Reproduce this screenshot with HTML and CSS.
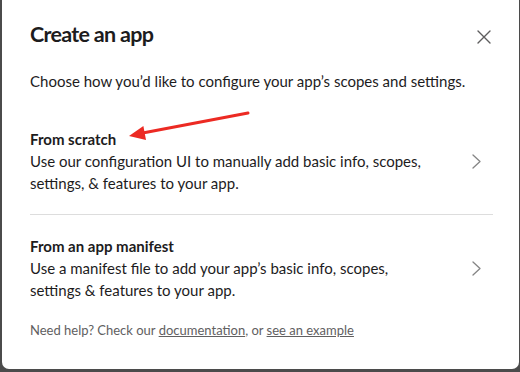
FILE: index.html
```html
<!DOCTYPE html>
<html>
<head>
<meta charset="utf-8">
<link rel="stylesheet" href="styles.css">
</head>
<body>
<div class="modal">
  <div class="header">
    <h1 class="title">Create an app</h1>
    <button class="close" aria-label="Close">
      <svg width="14" height="14" viewBox="0 0 14 14"><path d="M1 1 L13 13 M13 1 L1 13" stroke="#5e5d5e" stroke-width="1.4" fill="none" stroke-linecap="round"/></svg>
    </button>
  </div>
  <p class="intro">Choose how you’d like to configure your app’s scopes and settings.</p>
  <div class="option option-first">
    <div class="option-text">
      <div class="option-title">From scratch</div>
      <div class="option-desc">Use our configuration UI to manually add basic info, scopes, settings, &amp; features to your app.</div>
    </div>
    <svg class="chev" width="9" height="15" viewBox="0 0 9 15"><path d="M1 1 L8 7.5 L1 14" stroke="#858585" stroke-width="1.3" fill="none" stroke-linecap="round" stroke-linejoin="round"/></svg>
  </div>
  <div class="divider"></div>
  <div class="option">
    <div class="option-text">
      <div class="option-title">From an app manifest</div>
      <div class="option-desc">Use a manifest file to add your app’s basic info, scopes, settings &amp; features to your app.</div>
    </div>
    <svg class="chev" width="9" height="15" viewBox="0 0 9 15"><path d="M1 1 L8 7.5 L1 14" stroke="#858585" stroke-width="1.3" fill="none" stroke-linecap="round" stroke-linejoin="round"/></svg>
  </div>
  <p class="help">Need help? Check our <a href="#">documentation</a>, or <a href="#">see an example</a></p>
  <svg class="arrow" width="520" height="372" viewBox="0 0 520 372">
    <line x1="248" y1="113" x2="140" y2="133.5" stroke="#ec2a23" stroke-width="3" stroke-linecap="round"/>
    <polygon points="129,136 143.4,126 146,140" fill="#ec2a23"/>
  </svg>
</div>
</body>
</html>
```
FILE: styles.css
```css
html, body {
  margin: 0;
  padding: 0;
  width: 520px;
  height: 372px;
  overflow: hidden;
  background: #4b4b4b;
}
body {
  font-family: Lato, "Noto Sans", sans-serif;
  color: #1d1c1d;
}
.modal {
  position: relative;
  box-sizing: border-box;
  width: 517px;
  height: 369px;
  margin-left: 2px;
  background: #fff;
  border-radius: 0 0 7px 7px;
  padding: 20px 26px 0 28px;
}
.header {
  display: flex;
  justify-content: space-between;
  align-items: flex-start;
}
.title {
  margin: 0;
  font-size: 21.5px;
  line-height: 28px;
  font-weight: 700;
  letter-spacing: -0.7px;
}
.close {
  border: 0;
  background: none;
  padding: 0;
  margin: 10px 2px 0 0;
  width: 14px;
  height: 14px;
  display: block;
}
.close svg { display: block; }
.intro {
  margin: 22px 0 0;
  font-size: 15px;
  line-height: 22px;
}
.option {
  display: flex;
  align-items: center;
  justify-content: space-between;
  padding: 20px 0;
}
.option-first { padding-top: 36px; }
.option-text {
  max-width: 412px;
  font-size: 15px;
  line-height: 22px;
}
.option-title { font-weight: 700; }
.chev {
  display: block;
  margin-right: 12px;
  flex: none;
}
.divider {
  height: 1px;
  background: #dddddd;
}
.help {
  margin: 0;
  font-size: 13px;
  line-height: 18px;
  color: #616061;
}
.help a {
  color: #616061;
  text-decoration: underline;
}
.arrow {
  position: absolute;
  left: -2px;
  top: 0;
  pointer-events: none;
}
```
